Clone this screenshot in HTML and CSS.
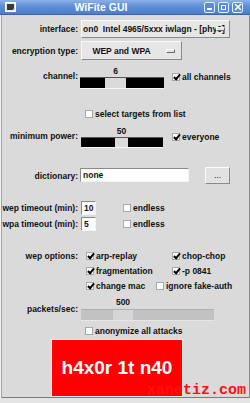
FILE: index.html
```html
<!DOCTYPE html>
<html lang="en">
<head>
  <meta charset="UTF-8">
  <title>WiFite GUI</title>
  <link rel="stylesheet" href="styles.css">
</head>
<body>
<div class="win">
  <div class="titlebar">
    <span class="ticon"><span class="ticon-in"></span></span>
    <span class="ttl">WiFite GUI</span>
    <span class="tbtns">
      <span class="tb"><span class="g-min"></span></span>
      <span class="tb"><span class="g-max"></span></span>
      <span class="tb"><svg width="8" height="8" viewBox="0 0 8 8"><path d="M1 1L7 7M7 1L1 7" stroke="#fff" stroke-width="1.6"/></svg></span>
    </span>
  </div>
  <div class="body">
    <div class="row r-iface">
      <span class="lbl">interface:</span>
      <div class="combo c-iface"><span class="ctext">on0  Intel 4965/5xxx iwlagn - [phy0]</span><span class="cind"></span></div>
    </div>
    <div class="row r-enc">
      <span class="lbl">encryption type:</span>
      <div class="combo c-enc"><span class="ctext">WEP and WPA</span><span class="cind"></span></div>
    </div>
    <div class="row r-chan">
      <span class="lbl">channel:</span>
      <div class="scale s-chan">
        <span class="sval">6</span>
        <span class="seg"></span><span class="knob"></span><span class="seg"></span>
      </div>
      <span class="cbx c-right1"><span class="box on"></span>all channels</span>
    </div>
    <div class="row r-sel">
      <span class="lbl"></span>
      <span class="cbx c-left"><span class="box"></span>select targets from list</span>
    </div>
    <div class="row r-pow">
      <span class="lbl">minimum power:</span>
      <div class="scale s-pow">
        <span class="sval">50</span>
        <span class="seg"></span><span class="knob"></span><span class="seg"></span>
      </div>
      <span class="cbx c-right2"><span class="box on"></span>everyone</span>
    </div>
    <div class="row r-dict">
      <span class="lbl">dictionary:</span>
      <span class="entry e-dict">none</span>
      <span class="btn">...</span>
    </div>
    <div class="row r-wep">
      <span class="lbl">wep timeout (min):</span>
      <span class="entry e-num">10</span>
      <span class="cbx c-endless"><span class="box"></span>endless</span>
    </div>
    <div class="row r-wpa">
      <span class="lbl">wpa timeout (min):</span>
      <span class="entry e-num">5</span>
      <span class="cbx c-endless"><span class="box"></span>endless</span>
    </div>
    <div class="row r-opt1">
      <span class="lbl">wep options:</span>
      <span class="cbx c-opt"><span class="box on"></span>arp-replay</span>
      <span class="cbx"><span class="box on"></span>chop-chop</span>
    </div>
    <div class="row r-opt">
      <span class="lbl"></span>
      <span class="cbx c-opt"><span class="box on"></span>fragmentation</span>
      <span class="cbx"><span class="box on"></span>-p 0841</span>
    </div>
    <div class="row r-opt">
      <span class="lbl"></span>
      <span class="cbx c-opt c-mac"><span class="box on"></span>change mac</span>
      <span class="cbx"><span class="box"></span>ignore fake-auth</span>
    </div>
    <div class="row r-pps">
      <span class="lbl">packets/sec:</span>
      <div class="scale s-pps">
        <span class="sval">500</span>
        <span class="seg"></span><span class="knob"></span><span class="seg"></span>
      </div>
    </div>
    <div class="row r-anon">
      <span class="lbl"></span>
      <span class="cbx c-left"><span class="box"></span>anonymize all attacks</span>
    </div>
    <div class="go">h4x0r 1t n40</div>
  </div>
</div>
<div class="wm">xanetiz.com</div>
</body>
</html>
```

FILE: styles.css
```css
html,body{margin:0;padding:0;}
body{width:250px;height:403px;background:#e4e4e4;font-family:"Liberation Sans",Arial,sans-serif;font-size:8.5px;font-weight:bold;color:#111;position:relative;overflow:hidden;}
.win{height:398px;background:#dadada;box-shadow:inset 1px 0 #f2f2f2,inset 2px 0 #a4a4a4,inset -1px 0 #8c8c8c,inset 0 -1px #7a7a7a;}
.titlebar{height:15px;display:flex;align-items:center;background:linear-gradient(#8cb2e8,#5d8ed8 45%,#4e7ec8);border-bottom:1px solid #3d66a8;box-sizing:border-box;position:relative;}
.ticon{width:11px;height:10px;margin-left:5px;background:#e8e8e8;border:1px solid #fff;box-sizing:border-box;display:flex;padding:1px;}
.ticon-in{flex:1;background:#3a3a3a;border-radius:0 0 2px 0;}
.ttl{flex:1;text-align:center;color:#fff;font-size:10.5px;padding-right:18px;}
.tbtns{display:flex;gap:3px;margin-right:7px;}
.tb{width:11px;height:11px;border:1px solid #e8eefa;border-radius:2px;box-sizing:border-box;display:flex;align-items:center;justify-content:center;background:#5b8bd4;}
.g-min{width:5px;height:2px;background:#fff;margin-top:4px;}
.g-max{width:5px;height:5px;border:1px solid #fff;box-sizing:border-box;}
.row{display:flex;align-items:center;}
.lbl{width:78px;flex:none;text-align:right;margin-right:2px;white-space:nowrap;}
.r-iface{margin-top:5px;height:18px;}
.r-enc{margin-top:3px;height:19px;}
.r-chan{margin-top:5px;height:24px;}
.r-chan .lbl{padding-bottom:3px;}
.r-sel{margin-top:19px;height:12px;}
.r-pow{margin-top:5px;height:23px;}
.r-pow .lbl{padding-bottom:2px;}
.r-dict{margin-top:19px;height:17px;}
.r-wep{margin-top:17px;height:14px;}
.r-wpa{margin-top:2px;height:14px;}
.r-opt1{margin-top:19px;height:12px;}
.r-opt{margin-top:3px;height:12px;}
.r-pps{margin-top:4px;height:25px;}
.r-anon{margin-top:4px;height:12px;}
.combo{position:relative;height:100%;box-sizing:border-box;margin-left:1px;background:#e6e6e6;border:1px solid;border-color:#fbfbfb #8a8a8a #8a8a8a #fbfbfb;display:flex;align-items:center;overflow:hidden;white-space:pre;}
.c-iface{width:149px;}
.c-iface .ctext{padding-left:1px;flex:none;}
.c-enc{width:101px;justify-content:center;padding-right:20px;}
.cind{position:absolute;right:4px;top:50%;margin-top:-2px;width:9px;height:4px;box-sizing:border-box;background:#e2e2e2;border:1px solid;border-color:#fff #6e6e6e #6e6e6e #fff;}
.c-enc .cind{right:6px;}
.scale{display:grid;grid-template-rows:12px 1fr;height:100%;box-sizing:border-box;}
.sval{grid-row:1;grid-column:2;text-align:center;white-space:nowrap;justify-self:center;line-height:12px;}
.seg{grid-row:2;background:#000;}
.knob{grid-row:2;background:#dadada;}
.s-chan{grid-template-columns:25px 21px 38px;}
.s-pow{margin-left:1px;grid-template-columns:34px 13px 35px;grid-template-rows:12px 11px;}
.s-pps{margin-left:1px;grid-template-columns:32px 20px 81px;grid-template-rows:13px 12px;}
.s-chan .seg,.s-pow .seg{border-top:1px solid #555;border-bottom:1px solid #f4f4f4;}
.s-chan .knob,.s-pow .knob{border-bottom:1px solid #f4f4f4;border-top:1px solid #555;}
.s-pps .seg{background:#c2c2c2;border-top:1px solid #b0b0b0;border-bottom:1px solid #e6e6e6;}
.s-pps .knob{background:#d6d6d6;border-top:1px solid #b0b0b0;border-bottom:1px solid #e6e6e6;}
.cbx{display:flex;align-items:center;gap:2px;white-space:nowrap;}
.box{width:8px;height:8px;box-sizing:border-box;background:#fff;border:1px solid #a8a8a8;position:relative;flex:none;}
.box.on::after{content:"";position:absolute;left:2px;top:-1px;width:2px;height:5px;border:solid #000;border-width:0 2px 2px 0;transform:rotate(40deg);}
.c-left{margin-left:5px;}
.c-right1{margin-left:8px;}
.c-right2{margin-left:9px;}
.c-opt{margin-left:6px;width:86px;}
.c-mac{width:70px;}
.c-endless{margin-left:27px;}
.entry{height:14px;box-sizing:border-box;background:#fff;border:1px solid;border-color:#8a8a8a #f4f4f4 #f4f4f4 #8a8a8a;display:flex;align-items:center;padding-left:2px;}
.e-dict{width:109px;margin-top:1px;align-self:flex-start;}
.e-num{width:15px;margin-left:1px;}
.btn{width:25px;height:17px;box-sizing:border-box;margin-left:16px;background:#e2e2e2;border:1px solid;border-color:#fbfbfb #8a8a8a #8a8a8a #fbfbfb;display:flex;align-items:flex-end;justify-content:center;padding-bottom:3px;font-weight:normal;}
.go{margin:2px 0 0 51px;width:132px;height:58px;box-sizing:border-box;background:#ff0000;border:1px solid #ececec;color:#fff;font-size:19px;display:flex;align-items:center;justify-content:center;}
.wm{position:absolute;left:147px;top:382px;font-family:"Liberation Mono","DejaVu Sans Mono",monospace;font-size:15px;font-weight:bold;color:#ff1010;line-height:18px;letter-spacing:0;}
```
